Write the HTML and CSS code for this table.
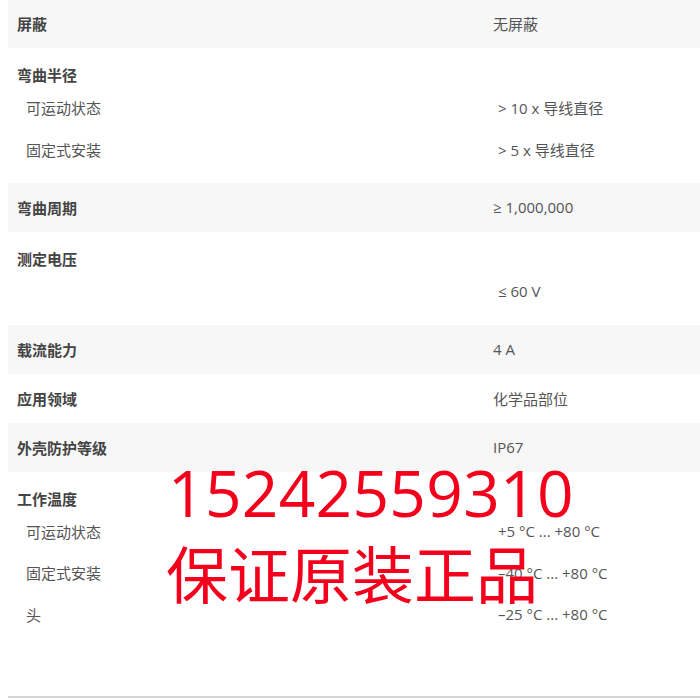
FILE: index.html
```html
<!DOCTYPE html>
<html lang="zh-CN">
  <head>
    <meta charset="UTF-8" />
    <meta name="viewport" content="width=device-width, initial-scale=1.0" />
    <title>技术参数</title>
    <link rel="stylesheet" href="styles.css">
  </head>
  <body>
    <div class="specs">
      <div class="row shaded">
        <div class="label">屏蔽</div>
        <div class="value">无屏蔽</div>
      </div>

      <div class="group">
        <div class="group-title">弯曲半径</div>
        <div class="sub">
          <div class="sub-label">可运动状态</div>
          <div class="sub-value">&gt; 10 x 导线直径</div>
        </div>
        <div class="sub">
          <div class="sub-label">固定式安装</div>
          <div class="sub-value">&gt; 5 x 导线直径</div>
        </div>
      </div>

      <div class="row shaded">
        <div class="label">弯曲周期</div>
        <div class="value">≥ 1,000,000</div>
      </div>

      <div class="group">
        <div class="group-title">测定电压</div>
        <div class="sub">
          <div class="sub-label"></div>
          <div class="sub-value">≤ 60 V</div>
        </div>
      </div>

      <div class="row shaded">
        <div class="label">载流能力</div>
        <div class="value">4 A</div>
      </div>

      <div class="row">
        <div class="label">应用领域</div>
        <div class="value">化学品部位</div>
      </div>

      <div class="row shaded">
        <div class="label">外壳防护等级</div>
        <div class="value">IP67</div>
      </div>

      <div class="group tall">
        <div class="group-title">工作温度</div>
        <div class="sub">
          <div class="sub-label">可运动状态</div>
          <div class="sub-value">+5 °C ... +80 °C</div>
        </div>
        <div class="sub">
          <div class="sub-label">固定式安装</div>
          <div class="sub-value">–40 °C ... +80 °C</div>
        </div>
        <div class="sub">
          <div class="sub-label">头</div>
          <div class="sub-value">–25 °C ... +80 °C</div>
        </div>
      </div>
    </div>

    <!-- seller watermark laid over the table -->
    <div class="stamp">
      <div class="stamp-phone">15242559310</div>
      <div class="stamp-text">保证原装正品</div>
    </div>
  </body>
</html>
```

FILE: styles.css
```css
body {
  margin: 0 0 0 8px;
  font-family: "Open Sans", "Noto Sans CJK SC", sans-serif;
  font-size: 15px;
  color: #555;
  background: white;
  position: relative;
  overflow: hidden;
  height: 700px;
}
.specs {
  margin-top: -1px;
  border-bottom: 2px solid #d6d6d6;
}
.row {
  display: grid;
  grid-template-columns: 485px 1fr;
  align-items: center;
  height: 49px;
}
.shaded {
  background: #f7f7f7;
}
.label,
.group-title {
  padding-left: 9px;
  font-weight: bold;
  color: #444;
}
.group {
  padding: 15px 0 12.5px;
}
.group.tall {
  padding-bottom: 60.5px;
}
.group-title {
  line-height: 24px;
}
.sub {
  display: grid;
  grid-template-columns: 485px 1fr;
  align-items: center;
  height: 41.5px;
}
.sub-label {
  padding-left: 18px;
}
.sub-value {
  padding-left: 5px;
}
.stamp {
  position: absolute;
  left: 160px;
  top: 449px;
  color: #f2001c;
  font-family: "Open Sans", "Noto Sans CJK SC", sans-serif;
  pointer-events: none;
}
.stamp-phone {
  font-size: 64px;
  line-height: 88px;
  letter-spacing: 0.3px;
}
.stamp-text {
  margin-left: -2px;
  font-size: 62px;
  line-height: 76px;
}
```
